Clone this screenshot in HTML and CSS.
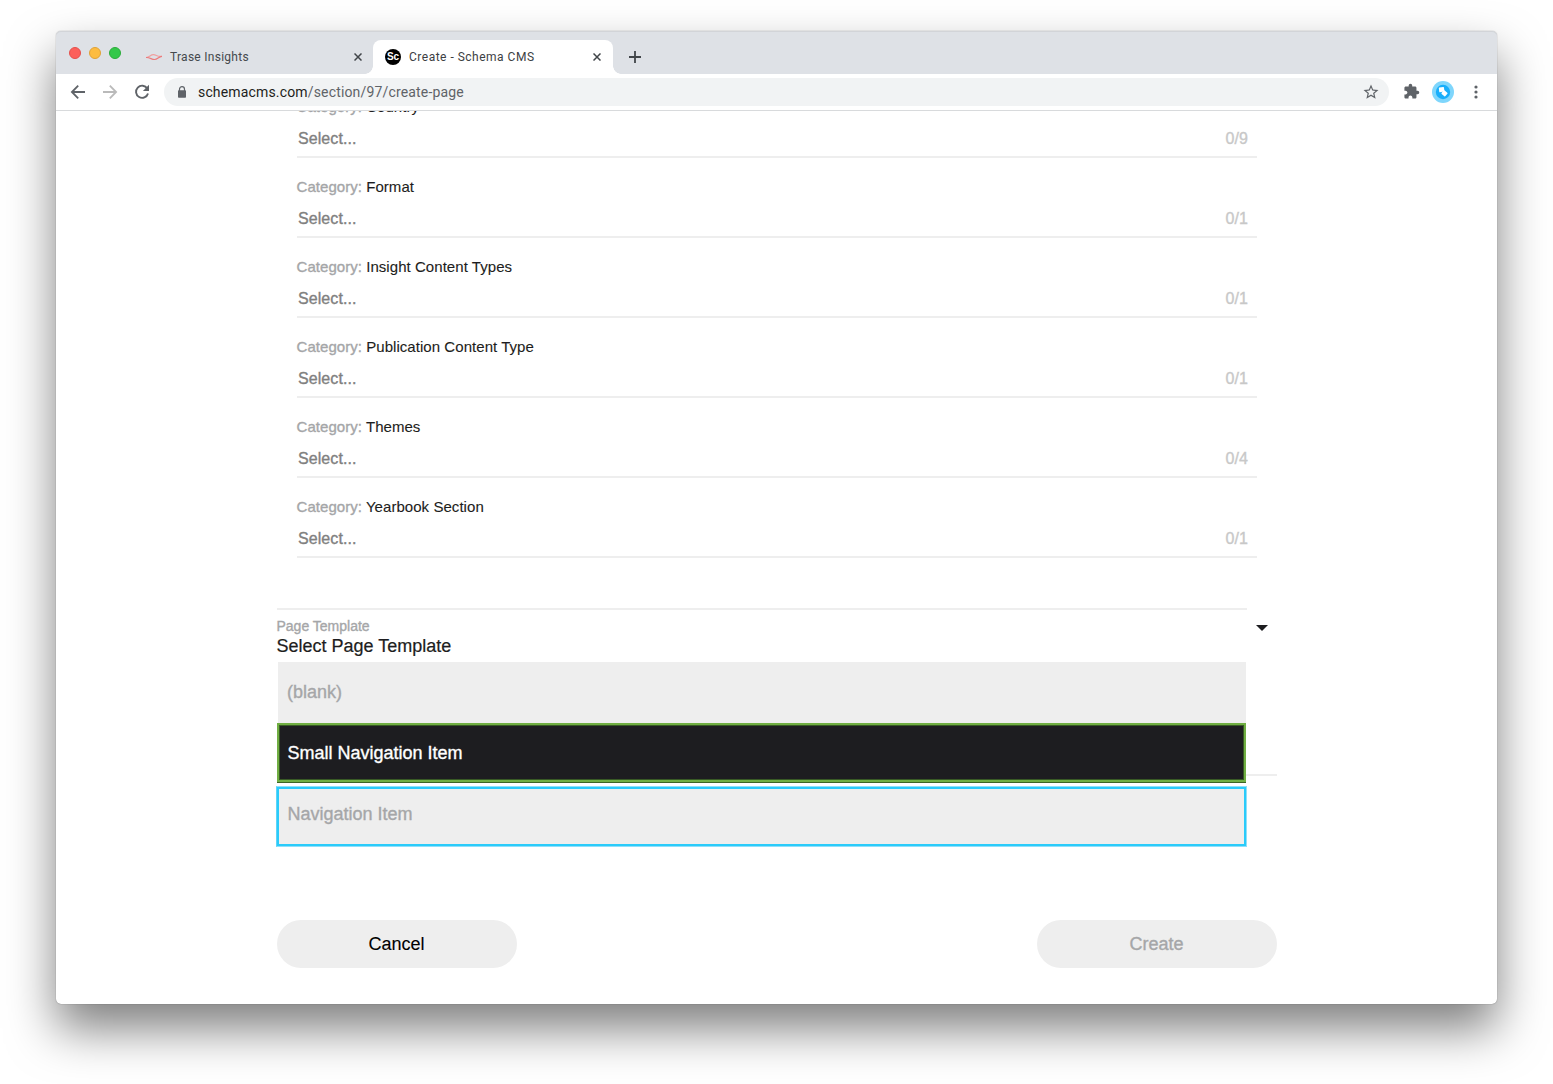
FILE: index.html
```html
<!DOCTYPE html>
<html lang="en">
<head>
<meta charset="utf-8">
<title>Create - Schema CMS</title>
<link rel="stylesheet" href="styles.css">
</head>
<body>
<div class="window">
  <header class="tabs">
    <div class="lights"><i class="light red"></i><i class="light amber"></i><i class="light green"></i></div>
    <div class="tab">
      <svg class="favicon" viewBox="0 0 16 16" fill="none" stroke-width="1.200"><path d="M0 8.500C3.500 8.500 4.500 5.600 7.500 5.700C10.500 5.900 11.500 8.200 16 7.300" stroke="#f0a0a0"/><path d="M0 8.500C4 8.300 5.500 10.500 8.500 10.500C11.500 10.500 12.500 7.800 16 7.300" stroke="#ec7a7c"/></svg>
      <span class="tab-title">Trase Insights</span>
      <svg class="close" viewBox="0 0 8 8"><path d="M.5.5l7 7M7.500.5l-7 7"/></svg>
    </div>
    <div class="tab active">
      <span class="favicon badge">Sc</span>
      <span class="tab-title">Create - Schema CMS</span>
      <svg class="close" viewBox="0 0 8 8"><path d="M.5.5l7 7M7.500.5l-7 7"/></svg>
    </div>
    <svg class="plus" viewBox="0 0 12 12"><path d="M6 0v12M0 6h12"/></svg>
  </header>
  <nav class="toolbar">
    <svg class="nav-icon" viewBox="0 0 16 16" fill="none" stroke="#5f6368" stroke-width="1.800"><path d="M15 8H2.300M8.200 1.700L1.900 8l6.300 6.300"/></svg>
    <svg class="nav-icon" viewBox="0 0 16 16" fill="none" stroke="#bababa" stroke-width="1.800"><path d="M1 8h12.700M7.800 1.700L14.100 8l-6.300 6.300"/></svg>
    <svg class="nav-icon" viewBox="0 0 16 16"><path d="M13.300 4.500A6.100 6.100 0 1 0 14 9.500" fill="none" stroke="#5f6368" stroke-width="1.900"/><path d="M15 .8v6.100H8.900z" fill="#5f6368"/></svg>
    <div class="address">
      <svg class="lock" viewBox="0 0 10 12"><path d="M2.500 5V3.200a2.500 2.500 0 0 1 5 0V5" fill="none" stroke="#5f6368" stroke-width="1.200"/><rect x="1" y="4.300" width="8" height="7.400" rx=".8" fill="#5f6368"/></svg>
      <span class="url"><b>schemacms.com</b>/section/97/create-page</span>
      <svg class="star" viewBox="0 0 24 24"><path fill="#5f6368" d="M22 9.240l-7.190-.620L12 2 9.190 8.630 2 9.240l5.460 4.730L5.820 21 12 17.270 18.180 21l-1.630-7.030L22 9.240zM12 15.400l-3.760 2.270 1-4.280-3.320-2.880 4.380-.380L12 6.100l1.710 4.040 4.380.380-3.320 2.880 1 4.280L12 15.400z"/></svg>
    </div>
    <svg class="puzzle" viewBox="0 0 24 24"><path fill="#5f6368" d="M20.500 11H19V7c0-1.100-.9-2-2-2h-4V3.500a2.500 2.500 0 0 0-5 0V5H4c-1.100 0-1.990.9-1.990 2v3.800H3.500c1.490 0 2.700 1.210 2.700 2.700s-1.210 2.700-2.700 2.700H2V20c0 1.100.9 2 2 2h3.800v-1.500c0-1.490 1.210-2.700 2.700-2.700 1.490 0 2.700 1.210 2.700 2.700V22H17c1.100 0 2-.9 2-2v-4h1.500a2.500 2.500 0 0 0 0-5z"/></svg>
    <svg class="profile" viewBox="0 0 22 22"><circle cx="11" cy="11" r="11" fill="#7fd6fc"/><circle cx="11" cy="11" r="7.200" fill="#18aefb"/><g fill="#fff"><rect x="7" y="6.300" width="5.200" height="4.600" rx=".6" transform="rotate(-8 9.500 8.500)"/><rect x="10" y="10" width="5" height="4.600" rx=".8" transform="rotate(40 12.500 12.300)"/></g></svg>
    <svg class="dots" viewBox="0 0 4 14" fill="#5f6368"><circle cx="2" cy="2" r="1.600"/><circle cx="2" cy="7" r="1.600"/><circle cx="2" cy="12" r="1.600"/></svg>
  </nav>
  <main class="page">
    <form class="form">
      <section class="categories">
        <div class="field"><label>Category: <b>Country</b></label><div class="select"><span>Select...</span><span class="count">0/9</span></div></div>
        <div class="field"><label>Category: <b>Format</b></label><div class="select"><span>Select...</span><span class="count">0/1</span></div></div>
        <div class="field"><label>Category: <b>Insight Content Types</b></label><div class="select"><span>Select...</span><span class="count">0/1</span></div></div>
        <div class="field"><label>Category: <b>Publication Content Type</b></label><div class="select"><span>Select...</span><span class="count">0/1</span></div></div>
        <div class="field"><label>Category: <b>Themes</b></label><div class="select"><span>Select...</span><span class="count">0/4</span></div></div>
        <div class="field"><label>Category: <b>Yearbook Section</b></label><div class="select"><span>Select...</span><span class="count">0/1</span></div></div>
      </section>
      <section class="template">
        <div class="rule"></div>
        <div class="template-head">
          <div><div class="caption">Page Template</div><div class="value">Select Page Template</div></div>
          <svg class="caret" viewBox="0 0 12 6"><path d="M0 0h12L6 6z" fill="#1d1d20"/></svg>
        </div>
        <div class="menu">
          <div class="option">(blank)</div>
          <div class="option selected">Small Navigation Item</div>
          <div class="option outlined">Navigation Item</div>
        </div>
      </section>
      <footer class="actions">
        <button type="button" class="button">Cancel</button>
        <button type="button" class="button muted">Create</button>
      </footer>
    </form>
  </main>
</div>
</body>
</html>
```
FILE: styles.css
```css
* { box-sizing: border-box; }

body {
  margin: 0;
  height: 1084px;
  padding: 31px 56px 80px;
  overflow: hidden;
  background: #fff;
  font-family: "Liberation Sans", Arial, sans-serif;
}

b { font-weight: 400; }
svg { display: block; flex: none; }

.window {
  display: flex;
  flex-direction: column;
  height: 973px;
  border-radius: 5px;
  background: #fff;
  box-shadow: 0 0 1px rgba(0, 0, 0, .55), 0 25px 48px rgba(0, 0, 0, .5);
}

/* Tab strip */
.tabs {
  display: flex;
  align-items: flex-end;
  height: 43px;
  flex: none;
  background: #dee1e6;
  border-radius: 5px 5px 0 0;
  box-shadow: inset 0 1px #d2d4d8;
}
.lights { display: flex; gap: 8px; width: 77px; height: 27px; padding-left: 13px; }
.light { width: 12px; height: 12px; border-radius: 50%; }
.red { background: #fc605b; border: 1px solid #e5504c; }
.amber { background: #fdbc40; border: 1px solid #e0a237; }
.green { background: #34c84a; border: 1px solid #2bac3b; }

.tab {
  position: relative;
  display: flex;
  align-items: center;
  width: 240px;
  height: 34px;
  padding: 0 11px 0 13px;
  font: 12px Roboto, sans-serif;
  letter-spacing: .27px;
  color: #45494d;
}
.tab.active {
  background: #fff;
  border-radius: 8px 8px 0 0;
  color: #3c4043;
  padding: 0 12px;
  letter-spacing: .5px;
}
.tab.active::before, .tab.active::after {
  content: "";
  position: absolute;
  bottom: 0;
  width: 8px;
  height: 8px;
}
.tab.active::before { left: -8px; background: radial-gradient(circle at 0 0, transparent 7.500px, #fff 8px); }
.tab.active::after { right: -8px; background: radial-gradient(circle at 100% 0, transparent 7.500px, #fff 8px); }
.favicon { width: 16px; height: 16px; margin-right: 8px; }
.badge {
  border-radius: 50%;
  background: #000;
  color: #fff;
  font: 700 10px/16px "Liberation Sans", sans-serif;
  text-align: center;
  letter-spacing: 0;
}
.tab-title { flex: 1; white-space: nowrap; }
.close { width: 8px; height: 8px; stroke: #414549; stroke-width: 1.500; fill: none; }
.plus { width: 12px; height: 12px; margin: 0 0 11px 16px; stroke: #414549; stroke-width: 1.800; fill: none; }

/* Toolbar */
.toolbar {
  display: flex;
  align-items: center;
  flex: none;
  height: 37px;
  padding: 0 19.500px 0 14px;
  border-bottom: 1px solid #d8dadc;
}
.nav-icon { width: 16px; height: 16px; margin-right: 16px; }
.address {
  display: flex;
  align-items: center;
  width: 1225px;
  height: 28px;
  margin-left: -2px;
  padding: 0 9px 0 13px;
  border-radius: 14px;
  background: #f1f3f4;
}
.lock { width: 10px; height: 12px; margin-right: 11px; }
.url { flex: 1; font: 14px Roboto, sans-serif; letter-spacing: .16px; color: #5f6368; }
.url b { color: #1d1e20; }
.star { width: 18px; height: 18px; }
.puzzle { width: 17px; height: 17px; margin: 0 0 1px 14px; }
.profile { width: 22px; height: 22px; margin-left: 12px; }
.dots { width: 4px; height: 14px; margin-left: auto; }

/* Form */
.page { flex: 1; min-height: 0; overflow: hidden; border-radius: 0 0 5px 5px; }
.form { width: 1000px; margin: -33px 0 0 221px; -webkit-text-stroke: .2px; }
.categories { padding: 0 20px 50px; }
.field { height: 80px; padding-top: 20px; border-bottom: 2px solid #eee; }
.field label {
  display: block;
  margin-left: -.5px;
  font-size: 15px;
  line-height: 18px;
  letter-spacing: .05px;
  color: #a5a6a8;
  -webkit-text-stroke: .35px;
}
.field label b { color: #1d1d20; -webkit-text-stroke: .1px; }
.select {
  display: flex;
  justify-content: space-between;
  padding: 14px 9px 0 1px;
  font-size: 16px;
  line-height: 18px;
  letter-spacing: .08px;
  color: #808080;
  -webkit-text-stroke: .35px;
}
.count { color: #c8c8c8; }

.template { position: relative; height: 168px; border-bottom: 2px solid #eee; }
.rule { width: 970px; height: 2px; background: #eee; }
.template-head { display: flex; justify-content: space-between; padding: 8px 9px 0 0; }
.caption { margin-left: -.5px; font-size: 14px; line-height: 17px; color: #a5a6a8; -webkit-text-stroke: .35px; }
.value { margin-left: -.5px; font-size: 18px; line-height: 22px; color: #1d1d20; }
.caret { width: 12px; height: 6px; margin-top: 7px; }

.menu { position: absolute; left: -1px; top: 54px; width: 971px; }
.option {
  display: flex;
  align-items: center;
  height: 61px;
  margin: 0 1px 0 2px;
  padding-left: 9px;
  background: #eee;
  font-size: 18px;
  color: #a5a6a8;
  -webkit-text-stroke: .35px;
}
.option.selected {
  height: 59px;
  margin-left: 1px;
  padding: 1px 0 0 8.500px;
  border: 2px solid #70ae42;
  box-shadow: inset 0 0 0 1px #385a25, 0 1px #3d6424;
  background: #1d1d20;
  color: #fff;
}
.option.outlined {
  margin: 4px 0 0;
  padding: 0 0 5px 10.500px;
  border: 1px solid #8fe0fa;
  border-left-color: #5dd5fa;
  box-shadow: inset 0 0 0 2px #2acbfa;
}

.actions { display: flex; justify-content: space-between; padding-top: 144px; }
.button {
  width: 240px;
  height: 48px;
  padding: 0 1px 0 0;
  border: 0;
  border-radius: 24px;
  background: #eee;
  color: #000;
  font: 18px "Liberation Sans", Arial, sans-serif;
  -webkit-text-stroke: .1px;
}
.button.muted { color: #a5a6a8; -webkit-text-stroke: .35px; }
```
